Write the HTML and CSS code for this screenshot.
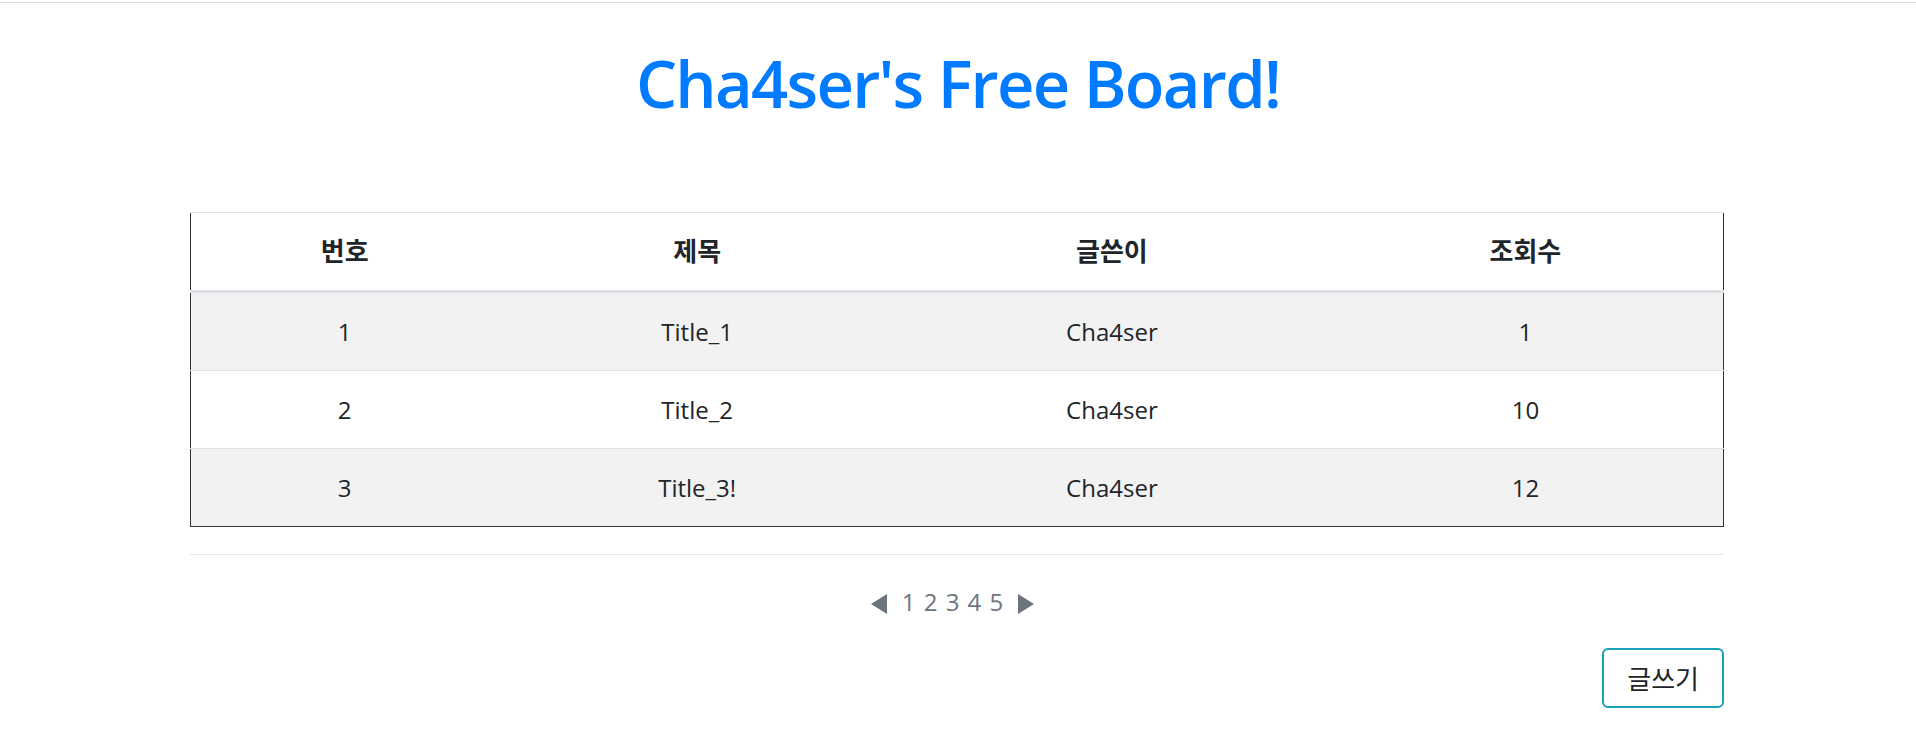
FILE: index.html
```html
<!DOCTYPE html>
<html lang="ko">
<head>
<meta charset="utf-8">
<title>Cha4ser's Free Board!</title>
<link rel="stylesheet" href="styles.css">
</head>
<body>
<div class="topline"></div>
<h1 class="title">Cha4ser's Free Board!</h1>
<div class="board">
  <table class="board-table">
    <colgroup>
      <col class="col-no">
      <col class="col-title">
      <col class="col-writer">
      <col class="col-views">
    </colgroup>
    <thead>
      <tr><th>번호</th><th>제목</th><th>글쓴이</th><th>조회수</th></tr>
    </thead>
    <tbody>
      <tr class="odd"><td>1</td><td>Title_1</td><td>Cha4ser</td><td>1</td></tr>
      <tr><td>2</td><td>Title_2</td><td>Cha4ser</td><td>10</td></tr>
      <tr class="odd"><td>3</td><td>Title_3!</td><td>Cha4ser</td><td>12</td></tr>
    </tbody>
  </table>
  <hr class="divider">
  <nav class="pager">
    <svg class="caret" viewBox="0 0 16 20" width="16" height="20"><path d="M0 10 L16 0 L16 20 Z"/></svg>
    <span class="pages">1 2 3 4 5</span>
    <svg class="caret" viewBox="0 0 16 20" width="16" height="20"><path d="M16 10 L0 0 L0 20 Z"/></svg>
  </nav>
  <div class="actions">
    <button class="btn-write" type="button">글쓰기</button>
  </div>
</div>
</body>
</html>
```
FILE: styles.css
```css
html, body {
  margin: 0;
  padding: 0;
  background: #fff;
}
body {
  font-family: "Open Sans", "Noto Sans CJK KR", sans-serif;
  color: #212529;
  font-size: 24px;
}
.topline {
  margin-top: 2px;
  height: 1px;
  background: #d9d9d9;
}
.title {
  margin: 41px 0 0;
  text-align: center;
  font-size: 65px;
  line-height: 78px;
  font-weight: 600;
  letter-spacing: -1.7px;
  color: #007bff;
}
.board {
  margin: 90px 192px 0 190px;
}
.board-table {
  width: 100%;
  border-collapse: collapse;
  border: 1px solid #333;
  border-top: none;
}
.col-no { width: 308px; }
.col-title { width: 398px; }
.col-writer { width: 432px; }
.col-views { width: 396px; }
.board-table th,
.board-table td {
  text-align: center;
  padding: 20px 0;
  line-height: 37px;
  border-top: 1px solid #dee2e6;
}
.board-table th {
  font-size: 26px;
  font-weight: 700;
  border-bottom: 3px solid #dee2e6;
}
.board-table tbody tr:first-child td {
  border-top: none;
}
.board-table tbody tr:last-child td {
  border-bottom: 1px solid #333;
}
.board-table tr.odd td {
  background: #f2f2f2;
}
.divider {
  margin: 27px 0 0;
  border: 0;
  border-top: 1px solid #e6e6e6;
  height: 0;
}
.pager {
  margin-top: 29px;
  padding-right: 9px;
  height: 36px;
  display: flex;
  justify-content: center;
  align-items: center;
  gap: 15px;
  color: #6c757d;
  line-height: 36px;
}
.pages {
  word-spacing: 2px;
}
.caret {
  fill: #6c757d;
  margin-top: 4px;
}
.actions {
  margin-top: 28px;
  display: flex;
  justify-content: flex-end;
}
.btn-write {
  height: 60px;
  padding: 0 23px;
  font-family: "Open Sans", "Noto Sans CJK KR", sans-serif;
  font-size: 26px;
  color: #212529;
  background: #fff;
  border: 2px solid #17a2b8;
  border-radius: 6px;
}
```
